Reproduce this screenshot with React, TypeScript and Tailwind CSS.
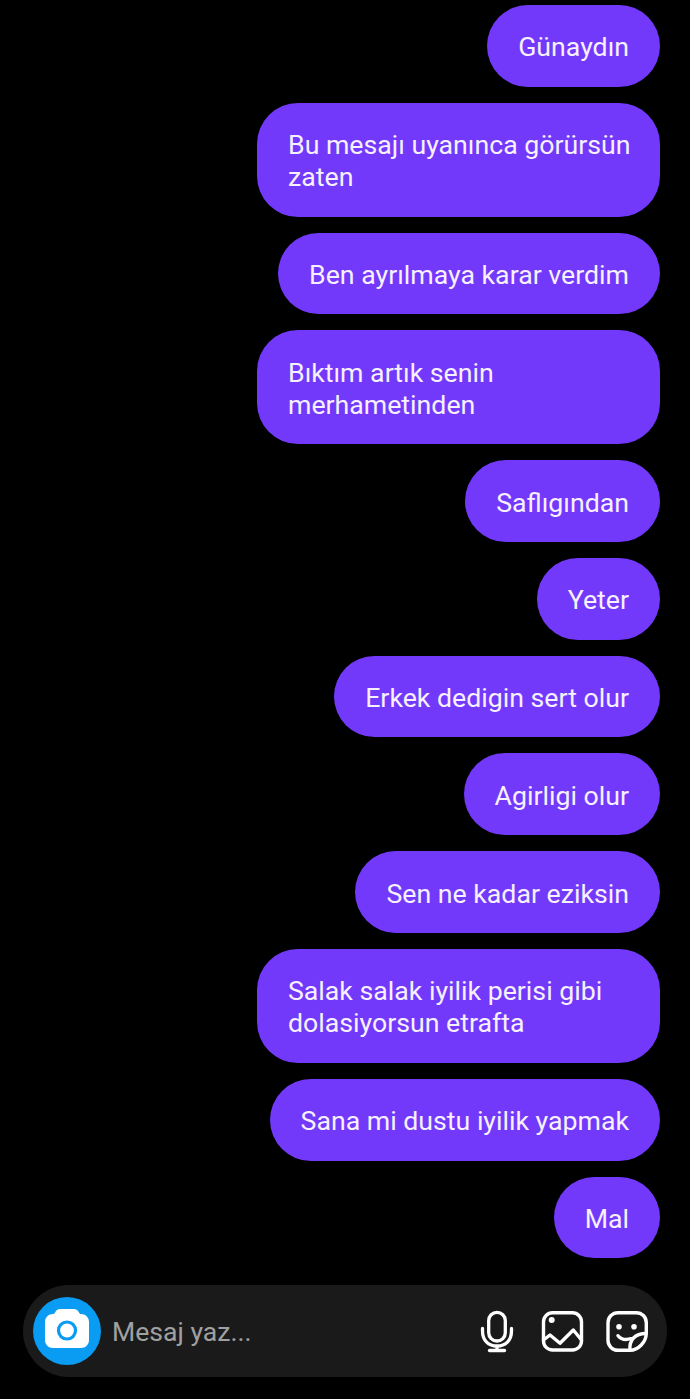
const messages: string[][] = [
  ["Günaydın"],
  ["Bu mesajı uyanınca görürsün", "zaten"],
  ["Ben ayrılmaya karar verdim"],
  ["Bıktım artık senin", "merhametinden"],
  ["Saflıgından"],
  ["Yeter"],
  ["Erkek dedigin sert olur"],
  ["Agirligi olur"],
  ["Sen ne kadar eziksin"],
  ["Salak salak iyilik perisi gibi", "dolasiyorsun etrafta"],
  ["Sana mi dustu iyilik yapmak"],
  ["Mal"],
];

export default function App() {
  return (
    <div className="w-[690px] h-[1399px] bg-black flex flex-col font-['Roboto',sans-serif] overflow-hidden">
      <div className="flex flex-col items-end gap-4 pt-[5px] pr-[30px]">
        {messages.map((lines) => (
          <div
            key={lines[0]}
            className={
              lines.length > 1
                ? "w-[403px] whitespace-nowrap rounded-[41px] bg-[#7339fb] pl-[31px] pr-[31px] pt-[26.400px] pb-[23.400px] text-[26.700px] leading-8 text-[#f6f0ff]"
                : "whitespace-nowrap rounded-[41px] bg-[#7339fb] pl-[31px] pr-[31px] pt-[26.400px] pb-[23.400px] text-[26.700px] leading-8 text-[#f6f0ff]"
            }
          >
            {lines.map((l) => (
              <div key={l}>{l}</div>
            ))}
          </div>
        ))}
      </div>
      <div className="mt-[26.400px] mx-[23px] h-[92px] rounded-[46px] bg-[#1a1a1a] flex items-center pl-[10px] pr-[18px]">
        <div className="w-[68px] h-[68px] rounded-full bg-[#0a9bf3] flex items-center justify-center">
          <svg width="44" height="44" viewBox="0 0 44 44">
            <path
              d="M15 0h14c2 0 3.500 1 4.500 2.700L35 5h1c4.500 0 8 3.500 8 8v18c0 4.500-3.500 8-8 8H8c-4.500 0-8-3.500-8-8V13c0-4.500 3.500-8 8-8h1l1.500-2.300C11.500 1 13 0 15 0z"
              fill="#fff"
            />
            <circle cx="22" cy="21.500" r="8.500" fill="none" stroke="#0a9bf3" strokeWidth="3.200" />
          </svg>
        </div>
        <span className="ml-[11px] flex-1 pt-[2px] text-[26.600px] text-[#a0a0a0]">Mesaj yaz...</span>
        <div className="flex items-center gap-[21px]">
          <svg className="mr-[5px]" width="34" height="44" viewBox="0 0 34 44" fill="none" stroke="#fff" strokeWidth="3.300" strokeLinecap="round">
            <rect x="8.700" y="3.300" width="16.600" height="28.700" rx="8.300" />
            <path d="M2.500 19.500v2.500c0 9.500 6 15 14.500 15s14.500-5.500 14.500-15v-2.500" />
            <path d="M17 37v4" strokeLinecap="butt" />
            <path d="M9.500 41.500h15" />
          </svg>
          <svg width="44" height="44" viewBox="0 0 44 44" fill="none" stroke="#fff" strokeWidth="3.400" strokeLinejoin="round" strokeLinecap="round">
            <rect x="3.500" y="3.800" width="38" height="37.200" rx="9" />
            <circle cx="11.700" cy="11" r="3" fill="#fff" stroke="none" />
            <path d="M3.500 31l6.500-5 10 8.300L33.300 21l8.200 10" />
          </svg>
          <svg width="44" height="44" viewBox="0 0 44 44" fill="none" stroke="#fff" strokeWidth="3.400" strokeLinejoin="round" strokeLinecap="round">
            <path d="M25 41.300H13C7.500 41.300 3 37 3 31.300V13.700C3 8 7.500 3.700 13 3.700h18.300c5.500 0 10 4.300 10 10V24c0 9-8 17.300-16.300 17.300z" />
            <path d="M25 41C24 31 30 24.500 41 24.500" />
            <circle cx="14" cy="17.700" r="2.800" fill="#fff" stroke="none" />
            <circle cx="29" cy="17.700" r="2.800" fill="#fff" stroke="none" />
            <path d="M13 26.700c3 3.800 8 4.400 13 3" />
          </svg>
        </div>
      </div>
    </div>
  );
}
